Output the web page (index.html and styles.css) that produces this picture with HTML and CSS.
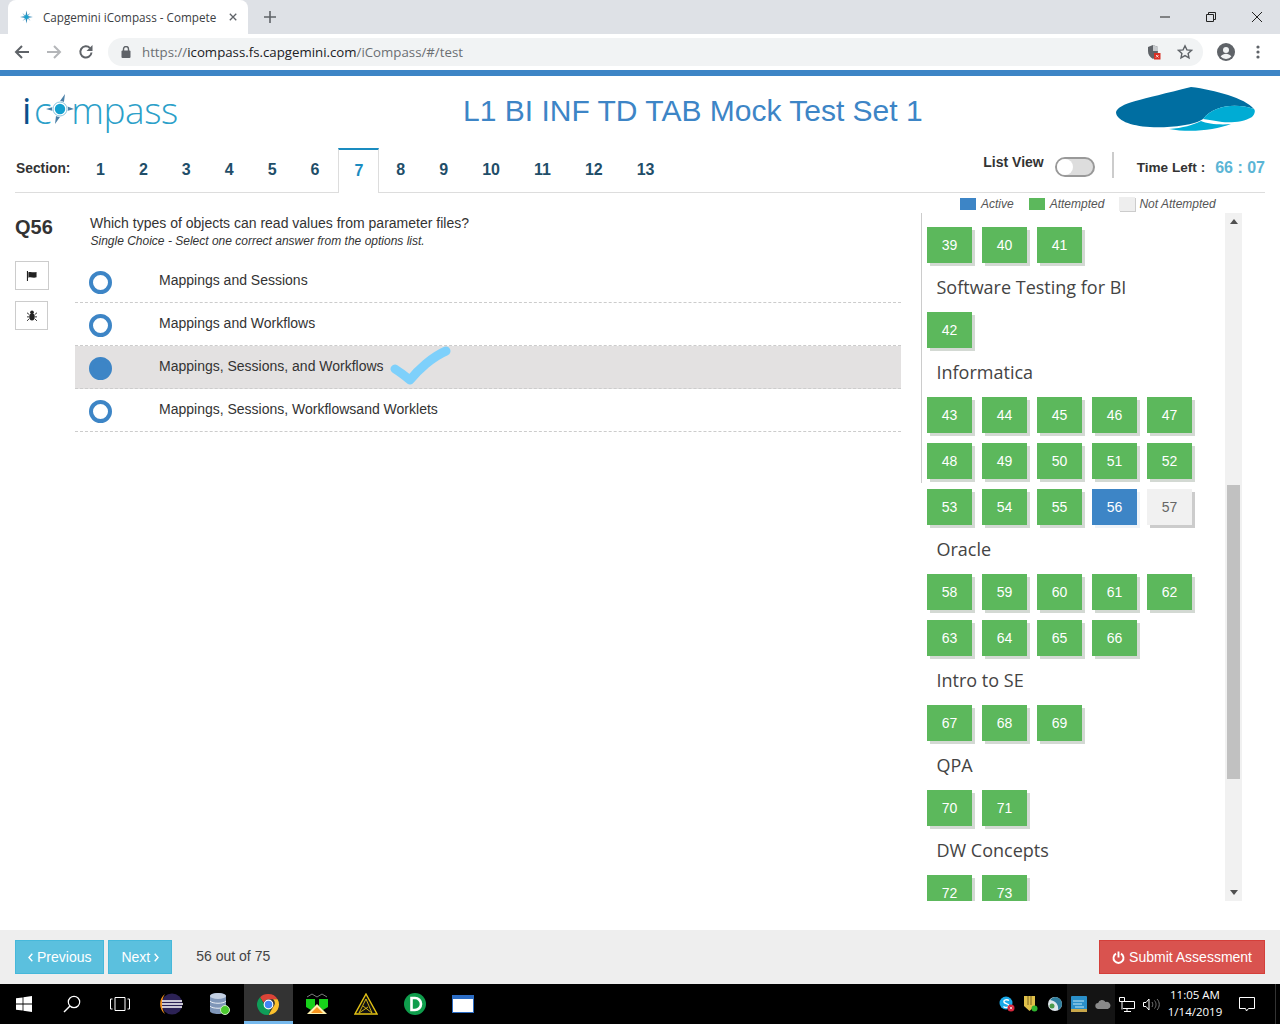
FILE: index.html
```html
<!DOCTYPE html>
<html lang="en">
<head>
    <meta charset="UTF-8">
    <meta name="viewport" content="width=device-width, initial-scale=1.0">
    <title>Capgemini iCompass - Competency</title>
    <link rel="stylesheet" href="styles.css">
</head>
<body>
    <!-- browser tab strip -->
    <div class="tabstrip">
        <div class="browser-tab">
            <svg class="favicon" width="16" height="16" viewBox="0 0 16 16"><path d="M8 0l1.3 6.7L16 8l-6.7 1.3L8 16 6.7 9.3 0 8l6.7-1.3z" fill="#2f86b5"/><path d="M3 3l4 3.4L13 3 9.6 7 13 13 9 9.6 3 13l3.4-4z" fill="#7fb6d2"/><circle cx="8" cy="8" r="2.6" fill="#17a2d0"/></svg>
            <span class="browser-tab-title">Capgemini iCompass - Compete</span>
            <svg class="tab-close" width="10" height="10" viewBox="0 0 10 10"><path d="M1 1l8 8M9 1l-8 8" stroke="#5f6368" stroke-width="1.6"/></svg>
        </div>
        <svg class="new-tab" width="12" height="12" viewBox="0 0 12 12"><path d="M6 0v12M0 6h12" stroke="#5f6368" stroke-width="1.6"/></svg>
        <div class="window-btns">
            <svg width="12" height="12" viewBox="0 0 12 12"><path d="M1 6h10" stroke="#222" stroke-width="1"/></svg>
            <svg width="12" height="12" viewBox="0 0 12 12"><path d="M1.5 3.5h7v7h-7zM3.5 3.5v-2h7v7h-2" fill="none" stroke="#222" stroke-width="1"/></svg>
            <svg width="12" height="12" viewBox="0 0 12 12"><path d="M1 1l10 10M11 1L1 11" stroke="#222" stroke-width="1"/></svg>
        </div>
    </div>

    <!-- browser toolbar -->
    <div class="toolbar">
        <svg class="tool-btn" width="16" height="16" viewBox="0 0 16 16"><path d="M15 8H2M8 2L2 8l6 6" fill="none" stroke="#5f6368" stroke-width="2"/></svg>
        <svg class="tool-btn" width="16" height="16" viewBox="0 0 16 16"><path d="M1 8h13M8 2l6 6-6 6" fill="none" stroke="#b4b6b9" stroke-width="2"/></svg>
        <svg class="tool-btn" width="16" height="16" viewBox="0 0 16 16"><path d="M13.5 8.5a5.6 5.6 0 1 1-1.5-4.4" fill="none" stroke="#5f6368" stroke-width="2"/><path d="M14.5 1v6h-6z" fill="#5f6368"/></svg>
        <div class="urlbar">
            <svg width="10" height="12" viewBox="0 0 10 12"><rect x="0.5" y="4.5" width="9" height="7.5" rx="1" fill="#5f6368"/><path d="M2.5 5V3a2.5 2.5 0 0 1 5 0v2" fill="none" stroke="#5f6368" stroke-width="1.4"/></svg>
            <span class="url"><span class="url-dim">https://</span>icompass.fs.capgemini.com<span class="url-dim">/iCompass/#/test</span></span>
            <svg class="url-shield" width="14" height="16" viewBox="0 0 14 16"><path d="M6 1l5 2v4c0 4-2 6-5 8-3-2-5-4-5-8V3z" fill="#5f6368"/><path d="M6 1l5 2v4H6z" fill="#c8cbce"/><rect x="7" y="9" width="6.5" height="6.5" fill="#d93025"/><path d="M9 11l2.5 2.5M11.5 11L9 13.5" stroke="#fff" stroke-width="0.8"/></svg>
            <svg class="url-star" width="16" height="16" viewBox="0 0 16 16"><path d="M8 1.8l1.9 4.1 4.5.5-3.3 3 .9 4.4L8 11.6l-4 2.2.9-4.4-3.3-3 4.5-.5z" fill="none" stroke="#5f6368" stroke-width="1.4"/></svg>
        </div>
        <svg class="avatar" width="18" height="18" viewBox="0 0 18 18"><circle cx="9" cy="9" r="9" fill="#5f6368"/><circle cx="9" cy="7" r="3" fill="#f1f3f4"/><path d="M3.6 13.6c1.4-2 3.4-2.8 5.4-2.8s4 .8 5.4 2.8A7 7 0 0 1 9 16a7 7 0 0 1-5.4-2.4z" fill="#f1f3f4"/></svg>
        <svg class="kebab" width="4" height="14" viewBox="0 0 4 14"><circle cx="2" cy="2" r="1.6" fill="#5f6368"/><circle cx="2" cy="7" r="1.6" fill="#5f6368"/><circle cx="2" cy="12" r="1.6" fill="#5f6368"/></svg>
    </div>

    <div class="topbar"></div>

    <header class="brand">
        <div class="logo">
            <span class="logo-i">i</span><span class="logo-c">c</span>
            <svg class="logo-compass" width="30" height="32" viewBox="0 0 30 32"><path d="M20 1l-1.500 11L29 16l-10.500 3L10 31l1.500-12L1 16l10.500-3z" fill="#4a7fa7"/><circle cx="15" cy="16" r="8" fill="#fff"/><circle cx="15" cy="16" r="7" fill="none" stroke="#8cc5dd" stroke-width="1"/><circle cx="15" cy="16" r="5.200" fill="#14a0cf"/></svg>
            <span class="logo-rest">mpass</span>
        </div>
        <h1>L1 BI INF TD TAB Mock Test Set 1</h1>
        <svg class="brand-mark" width="139" height="45" viewBox="0 0 139 45">
            <path d="M0 25C3 16 24 13 75 0c24 3 54 11 63 22-18-6-40-4-51 10-9 7-38 9-53 8C14 39 0 33 0 25z" fill="#006ea1"/>
            <path d="M87 32C98 18 120 16 138 22c2 2 0 6-2 8-8 5-21 6-30 5-6-1-12-2-19-3z" fill="#00acd4"/>
            <path d="M53 42c14-1 24-4 32-8 6 3 20 4 30 3-16 6-40 9-62 5z" fill="#00acd4"/>
        </svg>
    </header>

    <nav class="sections">
        <span class="sections-label">Section:</span>
        <a href="#" class="section-tab">1</a>
        <a href="#" class="section-tab">2</a>
        <a href="#" class="section-tab">3</a>
        <a href="#" class="section-tab">4</a>
        <a href="#" class="section-tab">5</a>
        <a href="#" class="section-tab">6</a>
        <a href="#" class="section-tab active">7</a>
        <a href="#" class="section-tab">8</a>
        <a href="#" class="section-tab">9</a>
        <a href="#" class="section-tab">10</a>
        <a href="#" class="section-tab">11</a>
        <a href="#" class="section-tab">12</a>
        <a href="#" class="section-tab">13</a>
        <div class="test-info">
            <span class="list-view">List View</span>
            <span class="toggle"></span>
            <span class="divider"></span>
            <span class="time-left">Time Left :</span>
            <span class="timer">66 : 07</span>
        </div>
    </nav>

    <main class="content">
        <aside class="q-side">
            <div class="q-number">Q56</div>
            <button class="q-tool flag-btn"><svg width="12" height="10" viewBox="0 0 12 11"><path d="M1 0v11" stroke="#222" stroke-width="1.2"/><path d="M2 1.5c3-1.500 5 1 9-.5v6c-4 1.500-6-1-9 .5z" fill="#222"/></svg></button>
            <button class="q-tool bug-btn"><svg width="10" height="11" viewBox="0 0 11 12"><ellipse cx="5.500" cy="7.500" rx="3" ry="4" fill="#222"/><circle cx="5.500" cy="2.500" r="2" fill="#222"/><path d="M0 3l2.500 2M11 3L8.500 5M0 7.500h2.500M11 7.500H8.500M0 12l2.500-2.500M11 12L8.500 9.500" stroke="#222"/></svg></button>
        </aside>

        <section class="question">
            <p class="q-text">Which types of objects can read values from parameter files?</p>
            <p class="q-hint">Single Choice - Select one correct answer from the options list.</p>
            <ul class="options">
                <li class="option"><span class="radio"></span>Mappings and Sessions</li>
                <li class="option"><span class="radio"></span>Mappings and Workflows</li>
                <li class="option selected"><span class="radio"></span>Mappings, Sessions, and Workflows
                    <svg class="tick" width="62" height="40" viewBox="0 0 62 40"><path d="M5 23c5 3 10 7 15 11C28 24 42 11 56 5" fill="none" stroke="#7ed0fb" stroke-width="9" stroke-linecap="round" stroke-linejoin="round"/></svg>
                </li>
                <li class="option"><span class="radio"></span>Mappings, Sessions, Workflowsand Worklets</li>
            </ul>
        </section>

        <section class="side">
            <div class="legend">
                <span class="swatch swatch-active"></span><em>Active</em>
                <span class="swatch swatch-done"></span><em>Attempted</em>
                <span class="swatch swatch-none"></span><em>Not Attempted</em>
            </div>
            <div class="palette">
                <div class="palette-list">
                    <div class="q-row"><a class="q-btn">39</a><a class="q-btn">40</a><a class="q-btn">41</a></div>
                    <h3>Software Testing for BI</h3>
                    <div class="q-row"><a class="q-btn">42</a></div>
                    <h3>Informatica</h3>
                    <div class="q-row">
                        <a class="q-btn">43</a><a class="q-btn">44</a><a class="q-btn">45</a><a class="q-btn">46</a><a class="q-btn">47</a>
                        <a class="q-btn">48</a><a class="q-btn">49</a><a class="q-btn">50</a><a class="q-btn">51</a><a class="q-btn">52</a>
                        <a class="q-btn">53</a><a class="q-btn">54</a><a class="q-btn">55</a><a class="q-btn current">56</a><a class="q-btn empty">57</a>
                    </div>
                    <h3>Oracle</h3>
                    <div class="q-row">
                        <a class="q-btn">58</a><a class="q-btn">59</a><a class="q-btn">60</a><a class="q-btn">61</a><a class="q-btn">62</a>
                        <a class="q-btn">63</a><a class="q-btn">64</a><a class="q-btn">65</a><a class="q-btn">66</a>
                    </div>
                    <h3>Intro to SE</h3>
                    <div class="q-row"><a class="q-btn">67</a><a class="q-btn">68</a><a class="q-btn">69</a></div>
                    <h3>QPA</h3>
                    <div class="q-row"><a class="q-btn">70</a><a class="q-btn">71</a></div>
                    <h3>DW Concepts</h3>
                    <div class="q-row"><a class="q-btn">72</a><a class="q-btn">73</a></div>
                </div>
                <div class="scrollbar">
                    <svg class="scroll-arrow" width="8" height="5" viewBox="0 0 8 5"><path d="M4 0l4 5H0z" fill="#505050"/></svg>
                    <div class="scroll-thumb"></div>
                    <svg class="scroll-arrow scroll-arrow-down" width="8" height="5" viewBox="0 0 8 5"><path d="M0 0h8L4 5z" fill="#505050"/></svg>
                </div>
            </div>
        </section>
    </main>

    <footer class="actions">
        <button class="btn btn-info"><svg class="chev" width="5" height="9" viewBox="0 0 5 9"><path d="M4.300.8L1 4.500l3.300 3.700" fill="none" stroke="#fff" stroke-width="1.400"/></svg>Previous</button>
        <button class="btn btn-info">Next<svg class="chev chev-right" width="5" height="9" viewBox="0 0 5 9"><path d="M.7.8L4 4.500.7 8.200" fill="none" stroke="#fff" stroke-width="1.400"/></svg></button>
        <span class="progress">56 out of 75</span>
        <button class="btn btn-danger"><svg class="power" width="13" height="13" viewBox="0 0 13 13"><path d="M4 2.600a5 5 0 1 0 5 0" fill="none" stroke="#fff" stroke-width="1.900"/><path d="M6.500 0.500v6" stroke="#fff" stroke-width="1.900"/></svg>Submit Assessment</button>
    </footer>

    <!-- windows taskbar -->
    <div class="taskbar">
        <div class="task"><svg width="16" height="16" viewBox="0 0 16 16"><path d="M0 2.300l6.600-.9v6.200H0zM7.400 1.300L16 0v7.600H7.400zM0 8.400h6.600v6.200L0 13.700zM7.400 8.400H16V16l-8.600-1.200z" fill="#fff"/></svg></div>
        <div class="task"><svg width="18" height="18" viewBox="0 0 18 18"><circle cx="11" cy="7" r="5.700" fill="none" stroke="#fff" stroke-width="1.200"/><path d="M7 11l-6 6" stroke="#fff" stroke-width="1.400"/></svg></div>
        <div class="task"><svg width="20" height="14" viewBox="0 0 20 14"><path d="M5 .5h10v13H5z" fill="none" stroke="#fff"/><path d="M2.500 2H.5v10h2M17.500 2h2v10h-2" fill="none" stroke="#fff"/></svg></div>
        <div class="task task-apps"><svg width="24" height="22" viewBox="0 0 24 22"><circle cx="13" cy="11" r="10.500" fill="#2c2255"/><path d="M6 1C0 5-1 16 6 21 2 15 2 7 6 1z" fill="#f7941e"/><path d="M3 8h20M3 11h21M3 14h20" stroke="#fff" stroke-width="1.400"/></svg></div>
        <div class="task"><svg width="22" height="24" viewBox="0 0 22 24"><path d="M1 4c0-4 16-4 16 0v15c0 4-16 4-16 0z" fill="#7f96b8"/><ellipse cx="9" cy="4" rx="8" ry="3" fill="#c4d0e2"/><path d="M1 9c2 3 14 3 16 0M1 14c2 3 14 3 16 0" fill="none" stroke="#e8edf5"/><circle cx="16" cy="18" r="4.500" fill="#4bc92e" stroke="#cdeec3"/></svg></div>
        <div class="task task-active"><svg width="23" height="23" viewBox="0 0 24 24"><path d="M12 1a11 11 0 0 1 9.500 5.500H12a5.500 5.500 0 0 0-5.200 3.700L3.200 4.400A11 11 0 0 1 12 1z" fill="#db4437"/><path d="M21.500 6.500A11 11 0 0 1 12 23l4.700-8.200a5.500 5.500 0 0 0 .1-8.300z" fill="#fbc02d"/><path d="M12 23A11 11 0 0 1 3.200 4.400l4.700 8.100a5.500 5.500 0 0 0 6.300 4.500z" fill="#0f9d58"/><circle cx="12" cy="12" r="4.500" fill="#4285f4" stroke="#fff" stroke-width="1.200"/></svg></div>
        <div class="task"><svg width="24" height="24" viewBox="0 0 24 24"><path d="M2 5l5-3 5 3 5-3 5 3" fill="none" stroke="#9a9a9a" stroke-width="0.800"/><path d="M1 7h9v7l-4 4-5-3z M14 7h9v8l-5 3-4-4z" fill="#17d11a"/><path d="M12 12l10 10H2z" fill="#fff3b0"/><path d="M12 15l6 6H6z" fill="#f7941e"/></svg></div>
        <div class="task"><svg width="24" height="22" viewBox="0 0 24 22"><path d="M12 1l11 20H1z" fill="#111" stroke="#e3c214" stroke-width="1.400"/><path d="M12 6l6 14M12 6L5 20M5 20l9-6M18 20l-9-7" stroke="#e3c214" stroke-width="0.900"/></svg></div>
        <div class="task"><svg width="22" height="22" viewBox="0 0 22 22"><circle cx="11" cy="11" r="11" fill="#0f9d4c"/><path d="M7.500 5H11a6 6 0 0 1 0 12H7.500z" fill="none" stroke="#fff" stroke-width="2.600"/></svg></div>
        <div class="task"><svg width="22" height="18" viewBox="0 0 22 18"><rect width="22" height="18" fill="#2b6cc4"/><rect x="1" y="4" width="20" height="13" fill="#fff"/></svg></div>

        <div class="tray">
            <div class="tray-icon"><svg width="16" height="16" viewBox="0 0 16 16"><circle cx="7" cy="7" r="6.500" fill="#1ba9e8"/><path d="M10 4.500C8 3 4.500 4 5 6c.5 2 5 1.500 5 4-.5 2-4 2-5.500.5" fill="none" stroke="#fff" stroke-width="1.400"/><circle cx="12" cy="12" r="3.500" fill="#d8263c"/><path d="M10.800 10.800l2.400 2.400M13.200 10.800l-2.400 2.400" stroke="#fff" stroke-width="0.700"/></svg></div>
            <div class="tray-icon"><svg width="14" height="16" viewBox="0 0 14 16"><path d="M0 0h11v10l-5.500 5L0 10z" fill="#e0c04a"/><path d="M4 0v9M7 0v9" stroke="#7a6420"/><circle cx="10.500" cy="12.500" r="3" fill="#2fb52f"/></svg></div>
            <div class="tray-icon"><svg width="14" height="14" viewBox="0 0 14 14"><circle cx="7" cy="7" r="7" fill="#dfe7ec"/><path d="M7 0a7 7 0 0 1 7 7c0 3-2 5-4 6 1-5-2-9-8-10a7 7 0 0 1 5-3z" fill="#2f7f9f"/><circle cx="4" cy="9" r="2.500" fill="#4b9a4a"/></svg></div>
            <div class="tray-icon tray-hot"><svg width="16" height="16" viewBox="0 0 16 16"><rect width="16" height="16" rx="1" fill="#2a8fc9"/><path d="M2 5h11M2 8h9M4 11h9" stroke="#bfe6f7"/><path d="M0 13h16v3H0z" fill="#c9a74a"/></svg></div>
            <div class="tray-icon tray-hot"><svg width="16" height="10" viewBox="0 0 16 10"><path d="M3.500 10a3 3 0 0 1-.4-6A4 4 0 0 1 10.500 3 3.500 3.500 0 0 1 12.800 10z" fill="#8a8a8a"/></svg></div>
            <div class="tray-icon"><svg width="16" height="15" viewBox="0 0 16 15"><path d="M4 4.500h11.500v7H4M8 11.500v3M5 14.500h7M.5.500h5v4h-5zM3 4.500v8" fill="none" stroke="#fff"/></svg></div>
            <div class="tray-icon"><svg width="17" height="13" viewBox="0 0 17 13"><path d="M.5 4.500h2.500l3-3.500v11l-3-3.500H.5z" fill="none" stroke="#fff"/><path d="M9 4c1 1.500 1 3.500 0 5M11.500 2.500c2 2.500 2 5.500 0 8M14 1c3 3 3 8 0 11" fill="none" stroke="#777"/></svg></div>
            <div class="clock"><span>11:05 AM</span><span>1/14/2019</span></div>
            <svg class="notify" width="16" height="15" viewBox="0 0 16 15"><path d="M.5.500h15v11h-6l-2 2.500-1-2.500h-6z" fill="none" stroke="#fff"/></svg>
            <span class="tray-edge"></span>
        </div>
    </div>
</body>
</html>
```

FILE: styles.css
```css
* {
    box-sizing: border-box;
}

body {
    margin: 0;
    width: 1280px;
    height: 1024px;
    overflow: hidden;
    display: flex;
    flex-direction: column;
    font-family: "Liberation Sans", Arial, sans-serif;
    font-size: 14px;
    color: #333;
    background-color: #fff;
}

/* browser chrome */
.tabstrip {
    height: 34px;
    flex: none;
    display: flex;
    align-items: center;
    padding-left: 8px;
    background-color: #dee1e6;
}

.browser-tab {
    width: 240px;
    height: 34px;
    display: flex;
    align-items: center;
    padding: 0 11px 0 12px;
    background-color: #fff;
    border-radius: 8px 8px 0 0;
}

.browser-tab-title {
    width: 175px;
    margin-left: 8px;
    padding-left: 2px;
    white-space: nowrap;
    font-family: "Open Sans", sans-serif;
    font-size: 11.7px;
    color: #3c4043;
}

.tab-close {
    margin-left: 13px;
}

.new-tab {
    margin-left: 16px;
}

.window-btns {
    margin-left: auto;
    display: flex;
    gap: 34px;
    padding-right: 17px;
}

.toolbar {
    height: 36px;
    flex: none;
    display: flex;
    align-items: center;
    padding-left: 14px;
    background-color: #fff;
}

.tool-btn {
    margin-right: 16px;
}

.urlbar {
    width: 1095px;
    height: 28px;
    margin-left: -2px;
    display: flex;
    align-items: center;
    padding: 0 10px 0 13px;
    background-color: #f1f3f4;
    border-radius: 14px;
}

.url {
    margin-left: 11px;
    font-family: "Open Sans", sans-serif;
    font-size: 13.25px;
    color: #202124;
}

.url-dim {
    color: #6b6f73;
}

.url-shield {
    margin-left: auto;
}

.url-star {
    margin-left: 16px;
}

.avatar {
    margin-left: 14px;
}

.kebab {
    margin-left: 21px;
}

.topbar {
    height: 6px;
    flex: none;
    background-color: #3d85c6;
}

/* page header */
.brand {
    height: 72px;
    flex: none;
    display: flex;
    align-items: center;
    padding: 0 25px 0 24px;
}

.brand h1 {
    margin: -2px 0 0 288px;
    font-size: 30px;
    font-weight: 400;
    color: #3d85c6;
    white-space: nowrap;
}

.logo {
    width: 151px;
    margin-top: -6px;
    display: flex;
    align-items: center;
    font-family: "Open Sans", sans-serif;
    font-size: 37px;
    font-weight: 300;
    line-height: 1;
    letter-spacing: -0.4px;
    color: #2ba0c9;
    white-space: nowrap;
}

.logo-i {
    margin-left: -2px;
    margin-right: 3px;
    color: #0b4f8a;
    font-weight: 400;
}

.logo-compass {
    margin: 0 -4px 0 -6px;
    flex: none;
}

.brand-mark {
    margin-left: auto;
    margin-top: -6px;
}

/* section tabs */
.sections {
    height: 45px;
    flex: none;
    margin: 0 15px;
    display: flex;
    align-items: flex-end;
    border-bottom: 1px solid #ddd;
}

.sections-label {
    width: 64px;
    padding: 0 0 16px 1px;
    font-size: 13.8px;
    font-weight: 700;
    color: #333;
}

.section-tab {
    height: 44px;
    padding: 13px 17px 0;
    font-size: 16px;
    font-weight: 700;
    color: #1f4e69;
    text-decoration: none;
}

.section-tab.active {
    height: 45px;
    margin: 0 0 -1px 2px;
    padding: 12px 15px 0;
    background-color: #fff;
    color: #1a8cc0;
    border: 1px solid #ddd;
    border-top: 2px solid #1a8cc0;
    border-bottom: none;
}

.test-info {
    margin-left: auto;
    height: 44px;
    display: flex;
    align-items: flex-start;
}

.list-view {
    margin-top: 6px;
    font-weight: 700;
}

.toggle {
    width: 40px;
    height: 20px;
    margin: 9px 0 0 11px;
    background-color: #ddd;
    border: 2px solid #999;
    border-radius: 10px;
    position: relative;
}

.toggle::after {
    content: "";
    position: absolute;
    left: 0;
    top: 0;
    width: 16px;
    height: 16px;
    background-color: #fff;
    border-radius: 50%;
}

.divider {
    width: 2px;
    height: 26px;
    margin: 4px 23px 0 17px;
    background-color: #ccc;
}

.time-left {
    margin-top: 12px;
    font-size: 13.6px;
    font-weight: 700;
}

.timer {
    margin: 11px 0 0 10px;
    font-size: 16px;
    font-weight: 700;
    color: #5bb5d5;
}

/* question area */
.content {
    flex: 1;
    min-height: 0;
    display: flex;
}

.q-side {
    width: 75px;
    flex: none;
    padding: 22px 0 0 15px;
}

.q-number {
    height: 46px;
    font-size: 20px;
    font-weight: 700;
    line-height: 24px;
}

.q-tool {
    display: flex;
    align-items: center;
    justify-content: center;
    height: 29px;
    margin-bottom: 11px;
    padding: 0;
    background-color: #fff;
    border: 1px solid #ccc;
}

.flag-btn {
    width: 34px;
}

.bug-btn {
    width: 33px;
}

.question {
    width: 826px;
    flex: none;
    padding-top: 22px;
}

.q-text {
    margin: 0 0 0 15px;
    line-height: 16px;
}

.q-hint {
    margin: 2px 0 0 15.5px;
    font-size: 12px;
    font-style: italic;
    line-height: 16px;
}

.options {
    margin: 11px 0 0;
    padding: 0;
    list-style: none;
}

.option {
    height: 43px;
    display: flex;
    align-items: center;
    padding: 0 0 3px 14px;
    border-bottom: 1px dashed #ccc;
}

.option.selected {
    background-color: #e3e1e1;
}

.radio {
    width: 23px;
    height: 23px;
    margin: 5px 47px 0 0;
    border: 4px solid #3d85c6;
    border-radius: 50%;
    flex: none;
}

.selected .radio {
    background-color: #3d85c6;
}

.tick {
    margin: -4px 0 -4px 6px;
}

/* question palette */
.side {
    margin-left: 20px;
    width: 321px;
    flex: none;
}

.legend {
    height: 20px;
    display: flex;
    align-items: center;
    padding: 1px 0 0 39px;
    font-size: 12px;
    color: #555;
}

.swatch {
    width: 16px;
    height: 12px;
    margin-right: 5px;
}

.legend em + .swatch {
    margin-left: 15px;
}

.swatch-active {
    background-color: #3d85c6;
}

.swatch-done {
    background-color: #5cb85c;
}

.legend .swatch-none {
    height: 14px;
    margin: 1px 4px 0 16px;
    background-color: #eee;
    box-shadow: 1px 1px 0 #ccc;
}

.palette {
    height: 688px;
    display: flex;
}

.palette-list {
    flex: 1;
    overflow: hidden;
    padding: 14px 0 0 6px;
    background: linear-gradient(#ccc, #ccc) left top / 1px 270px no-repeat;
}

.palette-list h3 {
    height: 49px;
    margin: 0;
    padding: 12px 0 0 9.5px;
    font-family: "Open Sans", sans-serif;
    font-size: 18px;
    font-weight: 400;
    line-height: 25px;
    color: #444;
}

.q-row {
    display: flex;
    flex-wrap: wrap;
    gap: 10px;
    width: 275px;
}

.q-btn {
    width: 45px;
    height: 36px;
    display: flex;
    align-items: center;
    justify-content: center;
    background-color: #5cb85c;
    color: #fff;
    box-shadow: 3px 3px 0 #d3d9d3;
}

.q-btn.current {
    background-color: #3d85c6;
    box-shadow: 3px 3px 0 #eef3f8;
}

.q-btn.empty {
    background-color: #f1f1f1;
    color: #666;
    box-shadow: 3px 3px 0 #ccc;
}

.scrollbar {
    width: 17px;
    flex: none;
    display: flex;
    flex-direction: column;
    align-items: center;
    background-color: #f1f1f1;
}

.scroll-arrow {
    margin-top: 6px;
}

.scroll-thumb {
    width: 13px;
    height: 294px;
    margin-top: 261px;
    background-color: #c1c1c1;
}

.scroll-arrow-down {
    margin-top: auto;
    margin-bottom: 6px;
}

/* footer */
.actions {
    height: 54px;
    flex: none;
    display: flex;
    align-items: center;
    padding: 0 15px;
    background-color: #eee;
}

.btn {
    height: 34px;
    display: inline-flex;
    align-items: center;
    padding: 0 12px;
    font-family: inherit;
    font-size: 14px;
    color: #fff;
    border: 1px solid;
}

.chev {
    margin-right: 4px;
}

.chev-right {
    margin: 0 0 0 4px;
}

.power {
    margin-right: 4px;
}

.btn-info {
    margin-right: 4px;
    background-color: #5bc0de;
    border-color: #46b8da;
}

.btn-danger {
    margin-left: auto;
    background-color: #d9534f;
    border-color: #d43f3a;
}

.progress {
    margin: -2px 0 0 20px;
    color: #444;
}

/* windows taskbar */
.taskbar {
    height: 40px;
    flex: none;
    display: flex;
    background-color: #000;
}

.task {
    width: 48.7px;
    height: 40px;
    flex: none;
    display: flex;
    align-items: center;
    justify-content: center;
}

.task:nth-child(-n+3) {
    width: 48px;
}

.task-apps {
    margin-left: 3px;
}

.task-active {
    background-color: #333;
    border-bottom: 3px solid #76b9ed;
    padding-top: 3px;
}

.tray {
    margin-left: auto;
    display: flex;
    align-items: center;
    padding-right: 4px;
}

.tray-icon {
    width: 24px;
    height: 40px;
    display: flex;
    align-items: center;
    justify-content: center;
}

.tray-hot {
    background-color: #141414;
}

.clock {
    width: 64px;
    margin-top: -2px;
    display: flex;
    flex-direction: column;
    align-items: center;
    font-family: "Open Sans", sans-serif;
    font-size: 11.5px;
    line-height: 17px;
    color: #fff;
}

.notify {
    margin: 0 20px 0 12px;
}

.tray-edge {
    width: 1px;
    height: 40px;
    background-color: #333;
}
```
